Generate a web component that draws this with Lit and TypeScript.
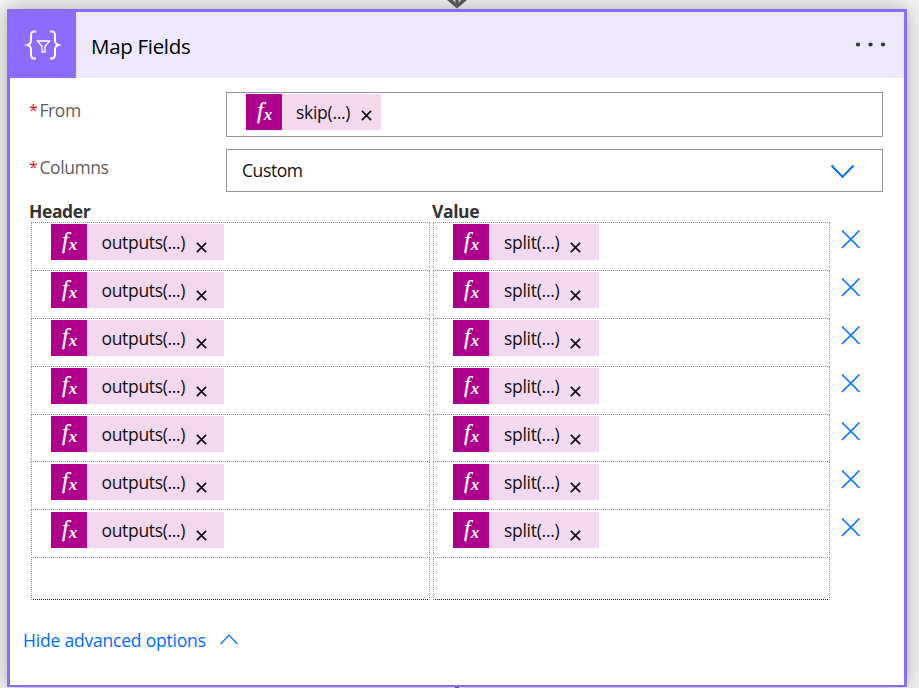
import { LitElement, html, css, svg } from "lit";
import { customElement, property } from "lit/decorators.js";

@customElement("fx-token")
class FxToken extends LitElement {
  @property() label = "";
  @property() kind = "";

  static styles = css`
    :host { display: flex; width: fit-content; height: 36px; background: #f2d9ed; color: #111; }
    .fx { width: 36px; height: 36px; flex: none; background: #ad008c; }
    .fx svg { display: block; }
    .fx text { font-family: "Liberation Serif", serif; font-style: italic; fill: #fff; }
    .label { margin-left: 14px; line-height: 37px; font-size: 17.5px; white-space: nowrap; letter-spacing: -0.28px; }
    .label.skip { width: 65px; }
    .label.outputs { width: 94.5px; margin-left: 14.5px; letter-spacing: -0.33px; }
    .label.split { width: 66px; margin-left: 15px; }
    .close { width: 11px; height: 11px; margin: 18px 17px 0 0; flex: none; }
    .close.skip { margin: 16px 9px 0 0; }
    .close.split { margin-right: 18px; }
  `;

  render() {
    return html`
      <span class="fx">
        <svg width="36" height="36">
          <text x="11" y="23.5" font-size="23" stroke="#fff" stroke-width=".25">f</text>
          <text x="17.8" y="26" font-size="17" font-weight="bold">x</text>
        </svg>
      </span>
      <span class="label ${this.kind}">${this.label}</span>
      <svg class="close ${this.kind}" viewBox="0 0 11 11">
        <path d="M.9.9 10.1 10.1M10.1.9.9 10.1" stroke="#111" stroke-width="1.7" fill="none" />
      </svg>
    `;
  }
}

@customElement("app-root")
class AppRoot extends LitElement {
  static styles = css`
    :host {
      display: block; box-sizing: border-box; width: 919px; height: 688px; overflow: hidden;
      position: relative; padding: 9px 12px 0 7px; background: #f3f3f3;
      font-family: "Open Sans", "Noto Sans", sans-serif; font-size: 17.5px; color: #111;
    }
    .card {
      box-sizing: border-box; width: 900px; height: 678px; background: #fff;
      border: 3px solid #8c6cff; border-bottom-width: 2px; box-shadow: 0 0 18px rgba(0, 0, 0, 0.3);
    }
    .arrow { position: absolute; left: 446px; top: 0; z-index: 1; }
    .tail { position: absolute; left: 455px; top: 687px; width: 4px; height: 1px; background: #555; }
    header { display: flex; height: 66px; background: #ede8fe; }
    .icon { width: 66px; height: 66px; background: #8c6cff; }
    .title { margin-left: 15px; line-height: 68px; font-size: 20.5px; letter-spacing: -0.3px; color: #000; flex: 1; }
    .dots { width: 32px; height: 6px; margin: 30px 17px 0 0; }
    .field { display: flex; margin-left: 19px; }
    .name { width: 197px; display: flex; color: #605e5c; line-height: 36px; letter-spacing: -0.42px; }
    .star { color: #e8112d; width: 10.5px; font-size: 16px; letter-spacing: 0; }
    .box { box-sizing: border-box; width: 657px; border: 1px solid #949494; }
    .from { margin-top: 14px; }
    .from .box { height: 45px; padding: 1px 0 0 19px; }
    .columns { margin-top: 12px; }
    .columns .name { line-height: 37px; }
    .columns .box { height: 43px; display: flex; justify-content: space-between; padding: 0 27px 0 15px; line-height: 41px; letter-spacing: -0.4px; }
    .columns .box svg { margin-top: 14px; }
    .heads { display: grid; grid-template-columns: 403px 1fr; margin: 9px 0 0 19px; height: 21px; line-height: 21px; font-weight: 700; color: #333; font-size: 17.5px; letter-spacing: -0.4px; }
    .rows { display: grid; grid-template-rows: repeat(7, 47.9px) 43px; margin-left: 21px; }
    .row { display: grid; grid-template-columns: 399px 397px 20px; column-gap: 3px; }
    .cell { box-sizing: border-box; height: 46px; border: 1px dotted #949494; border-bottom: 0; padding: 1.3px 0 0 19px; }
    .empty .cell { height: 43px; border-bottom: 1px dotted #222; }
    .remove { margin: 8.3px 0 0 7.6px; width: 20px; height: 20px; }
    .hide { display: flex; margin: 28px 0 0 13px; line-height: 25px; color: #006bff; }
    .hide span { width: 197px; letter-spacing: -0.2px; }
    .hide svg { margin-top: 6px; }
  `;

  render() {
    return html`
      <svg class="arrow" width="22" height="9"><path d="M1 0H21L11 8.5Z" fill="#555" /><path d="M6.5 0 9.5 3V0M12.5 0V3L15.5 0" fill="#bbb" /></svg>
      <section class="card">
        <header>
          <div class="icon">
            <svg width="66" height="66" fill="none" stroke="#fff">
              <path d="M26 19.5H24.5Q21 19.5 21 23.5V28.5Q21 32 17.5 33Q21 34 21 37.5V42.5Q21 46.5 24.5 46.5H26M40 19.5H41.5Q45 19.5 45 23.5V28.5Q45 32 48.5 33Q45 34 45 37.5V42.5Q45 46.5 41.5 46.5H40" stroke-width="1.9" />
              <path d="M27.5 29H39.5L35 34.5V40H32V34.5Z" stroke-width="1.3" />
            </svg>
          </div>
          <div class="title">Map Fields</div>
          <svg class="dots" viewBox="0 0 32 6" fill="#333">
            ${[3, 15.5, 28].map((x) => svg`<circle cx=${x} cy="2.5" r="2.1" />`)}
          </svg>
        </header>
        <div class="field from">
          <div class="name"><span class="star">*</span>From</div>
          <div class="box"><fx-token kind="skip" label="skip(...)"></fx-token></div>
        </div>
        <div class="field columns">
          <div class="name"><span class="star">*</span>Columns</div>
          <div class="box">Custom
            <svg width="25" height="15" fill="none" stroke="#006bff" stroke-width="1.9"><path d="M1.5 1.5 12.5 12.8 23.5 1.5" /></svg>
          </div>
        </div>
        <div class="heads"><span>Header</span><span>Value</span></div>
        <div class="rows">
          ${Array.from({ length: 7 }, () => html`
            <div class="row">
              <div class="cell"><fx-token kind="outputs" label="outputs(...)"></fx-token></div>
              <div class="cell"><fx-token kind="split" label="split(...)"></fx-token></div>
              <svg class="remove" fill="none" stroke="#006bff" stroke-width="1.5"><path d="M1 .5 18.5 18M18.5.5 1 18" /></svg>
            </div>`)}
          <div class="row empty"><div class="cell"></div><div class="cell"></div></div>
        </div>
        <div class="hide"><span>Hide advanced options</span>
          <svg width="18" height="11" fill="none" stroke="#006bff" stroke-width="1.2"><path d="M.5 10 9 1.2 17.5 10" /></svg>
        </div>
      </section>
      <div class="tail"></div>
    `;
  }
}
